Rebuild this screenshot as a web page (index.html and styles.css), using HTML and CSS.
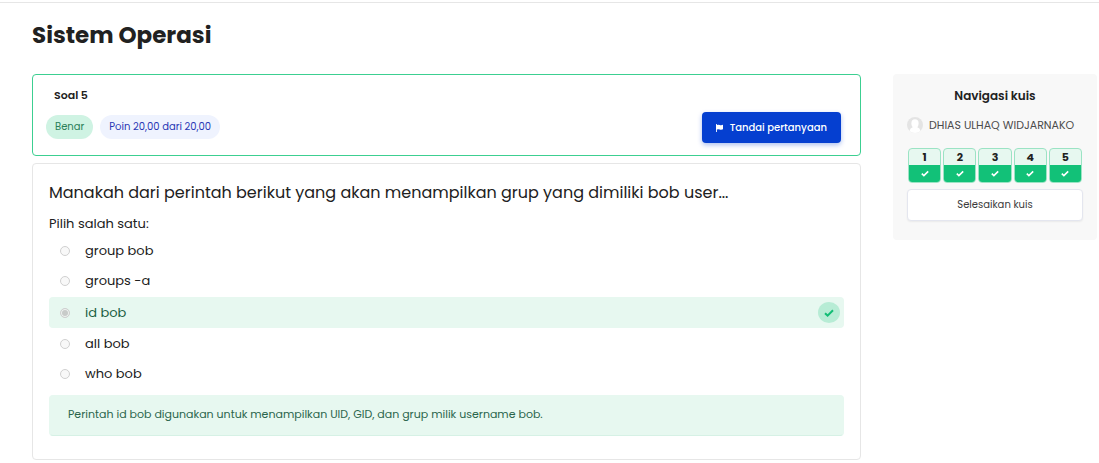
FILE: index.html
```html
<!DOCTYPE html>
<html lang="id">
<head>
<meta charset="utf-8">
<meta name="viewport" content="width=device-width, initial-scale=1">
<title>Sistem Operasi</title>
<link rel="stylesheet" href="styles.css">
</head>
<body>
<svg class="sprite" aria-hidden="true">
  <symbol id="check" viewBox="0 0 10 8"><path d="M1 4.2 3.6 6.6 9 1.3" fill="none" stroke="currentColor" stroke-width="2"/></symbol>
</svg>
<div class="page">
  <h1 class="page-title">Sistem Operasi</h1>
  <div class="layout">
    <main class="main">
      <section class="info">
        <div class="info-text">
          <h2 class="info-title">Soal 5</h2>
          <div class="pills">
            <span class="pill pill-correct">Benar</span>
            <span class="pill pill-grade">Poin 20,00 dari 20,00</span>
          </div>
        </div>
        <button class="flag-button" type="button">
          <svg class="flag-icon" viewBox="0 0 8 9" aria-hidden="true"><path d="M0 0h1v1.2Q2.700.3 4.300 1.100T8 .9V6Q6 6.900 4.300 6.200T1 6.200V9H0z" fill="currentColor"/></svg>
          Tandai pertanyaan
        </button>
      </section>
      <section class="question">
        <p class="question-text">Manakah dari perintah berikut yang akan menampilkan grup yang dimiliki bob user...</p>
        <fieldset class="answers">
          <legend class="prompt">Pilih salah satu:</legend>
          <label class="answer"><input class="radio" type="radio" name="answer" disabled>group bob</label>
          <label class="answer"><input class="radio" type="radio" name="answer" disabled>groups -a</label>
          <label class="answer answer-correct"><input class="radio" type="radio" name="answer" checked disabled>id bob<span class="badge"><svg class="badge-icon" aria-hidden="true"><use href="#check"/></svg></span></label>
          <label class="answer"><input class="radio" type="radio" name="answer" disabled>all bob</label>
          <label class="answer"><input class="radio" type="radio" name="answer" disabled>who bob</label>
        </fieldset>
        <div class="feedback">Perintah id bob digunakan untuk menampilkan UID, GID, dan grup milik username bob.</div>
      </section>
    </main>
    <aside class="sidebar">
      <h2 class="sidebar-title">Navigasi kuis</h2>
      <div class="user">
        <svg class="avatar" viewBox="0 0 16 16" aria-hidden="true"><circle cx="8" cy="8" r="8" fill="#e4e4e4"/><ellipse cx="8" cy="6.500" rx="3.600" ry="4.200" fill="#fff"/><path d="M2.500 14Q3 11 6 10h4q3 1 3.500 4Q11 16 8 16t-5.500-2z" fill="#fff"/></svg>
        <span class="user-name">DHIAS ULHAQ WIDJARNAKO</span>
      </div>
      <nav class="quiz-nav" aria-label="Navigasi kuis">
        <a class="nav-item" href="#1">1<span class="nav-state"><svg class="nav-icon" aria-hidden="true"><use href="#check"/></svg></span></a>
        <a class="nav-item" href="#2">2<span class="nav-state"><svg class="nav-icon" aria-hidden="true"><use href="#check"/></svg></span></a>
        <a class="nav-item" href="#3">3<span class="nav-state"><svg class="nav-icon" aria-hidden="true"><use href="#check"/></svg></span></a>
        <a class="nav-item" href="#4">4<span class="nav-state"><svg class="nav-icon" aria-hidden="true"><use href="#check"/></svg></span></a>
        <a class="nav-item" href="#5">5<span class="nav-state"><svg class="nav-icon" aria-hidden="true"><use href="#check"/></svg></span></a>
      </nav>
      <button class="finish-button" type="button">Selesaikan kuis</button>
    </aside>
  </div>
</div>
</body>
</html>
```
FILE: styles.css
```css
* { box-sizing: border-box; }

body {
  margin: 0;
  padding-top: 2px;
  background: #fff;
  color: #212121;
  font-family: Poppins, Inter, "Liberation Sans", sans-serif;
  font-size: 13px;
}

h1, h2, p { margin: 0; }

button { font: inherit; cursor: pointer; }

.sprite { display: none; }

.page {
  border-top: 1px solid #e6e6e6;
  padding: 16px 2px 3px 32px;
}

.page-title {
  margin-bottom: 23px;
  font-size: 23px;
  line-height: 32px;
  font-weight: 700;
}

.layout {
  display: grid;
  grid-template-columns: minmax(0, 1fr) 204px;
  gap: 32px;
  align-items: start;
}

.main { display: grid; gap: 7px; }

.info {
  display: flex;
  justify-content: space-between;
  align-items: flex-end;
  padding: 12px 19px 12px 13px;
  border: 1px solid #3ccf91;
  border-radius: 4px;
}

.info-text { padding-bottom: 4px; }

.info-title {
  margin: 0 0 12px 8px;
  font-size: 11px;
  line-height: 16px;
  font-weight: 600;
}

.pills { display: flex; gap: 7px; }

.pill {
  padding: 0 9px;
  border-radius: 12px;
  font-size: 10px;
  line-height: 24px;
}

.pill-correct { background: #cff3e3; color: #2a8058; }
.pill-grade { background: #eff3fe; color: #2937b4; }

.flag-button {
  display: flex;
  align-items: center;
  gap: 7px;
  padding: 0 14px;
  border: 0;
  border-radius: 4px;
  background: #053fd0;
  box-shadow: 0 2px 5px #053fd055;
  color: #fff;
  font-size: 10px;
  line-height: 31px;
  font-weight: 500;
}

.flag-icon { width: 7px; height: 8px; }

.question {
  padding: 17px 16px 23px;
  border: 1px solid #e6e6e6;
  border-radius: 4px;
}

.question-text {
  margin-bottom: 9px;
  font-size: 16px;
  line-height: 24px;
}

.answers {
  margin: 0 0 6px;
  padding: 0;
  border: 0;
}

.prompt {
  margin-bottom: 2px;
  padding: 0;
  line-height: 20px;
}

.answer {
  display: flex;
  align-items: center;
  gap: 15px;
  min-height: 30px;
  padding: 0 4px 0 11px;
}

.answer-correct {
  min-height: 31px;
  margin: 1px 0;
  border-radius: 4px;
  background: #e7f8f0;
  color: #1b6043;
}

.radio {
  appearance: none;
  width: 10px;
  height: 10px;
  margin: 0;
  border: 1px solid #d0d0d0;
  border-radius: 50%;
  background: #f8f8f8;
}

.radio:checked {
  background: #c8cbc9;
  box-shadow: inset 0 0 0 1px #f0f5f2;
}

.badge {
  display: grid;
  place-items: center;
  width: 22px;
  height: 21px;
  margin-left: auto;
  border-radius: 50%;
  background: #b7ecd5;
  color: #12bd75;
}

.badge-icon { width: 10px; height: 8px; }

.feedback {
  padding: 7px 18px 9px;
  border: 1px solid #e7f8f0;
  border-bottom-color: #d6f1e5;
  border-radius: 4px;
  background: #e7f8f0;
  color: #2a654c;
  font-size: 11px;
  line-height: 23px;
}

.sidebar {
  padding: 14px 14px 19px;
  border-radius: 4px;
  background: #f8f8f8;
}

.sidebar-title {
  margin-bottom: 12px;
  font-size: 12px;
  line-height: 16px;
  font-weight: 600;
  text-align: center;
}

.user {
  display: flex;
  align-items: center;
  gap: 6px;
  margin-bottom: 14px;
  color: #4b4b4b;
  font-size: 11px;
  line-height: 18px;
}

.avatar { width: 16px; height: 16px; flex: none; }

.user-name { white-space: nowrap; }

.quiz-nav {
  display: grid;
  grid-template-columns: repeat(5, 1fr);
  gap: 2px;
  margin: 0 1px 6px;
}

.nav-item {
  border: 1px solid #9be3c4;
  border-radius: 4px;
  background: #e7f8f0;
  color: #212121;
  font-size: 11px;
  line-height: 16px;
  font-weight: 700;
  text-align: center;
  text-decoration: none;
  overflow: hidden;
}

.nav-state {
  display: grid;
  place-items: center;
  height: 17px;
  background: #12c178;
  color: #fff;
}

.nav-icon { width: 8px; height: 7px; }

.finish-button {
  width: 100%;
  padding: 0;
  border: 1px solid #e4e6ef;
  border-radius: 4px;
  background: #fff;
  box-shadow: 0 1px 2px #0000000f;
  color: #3b3b3b;
  font-size: 10px;
  line-height: 30px;
  font-weight: 400;
}
```
